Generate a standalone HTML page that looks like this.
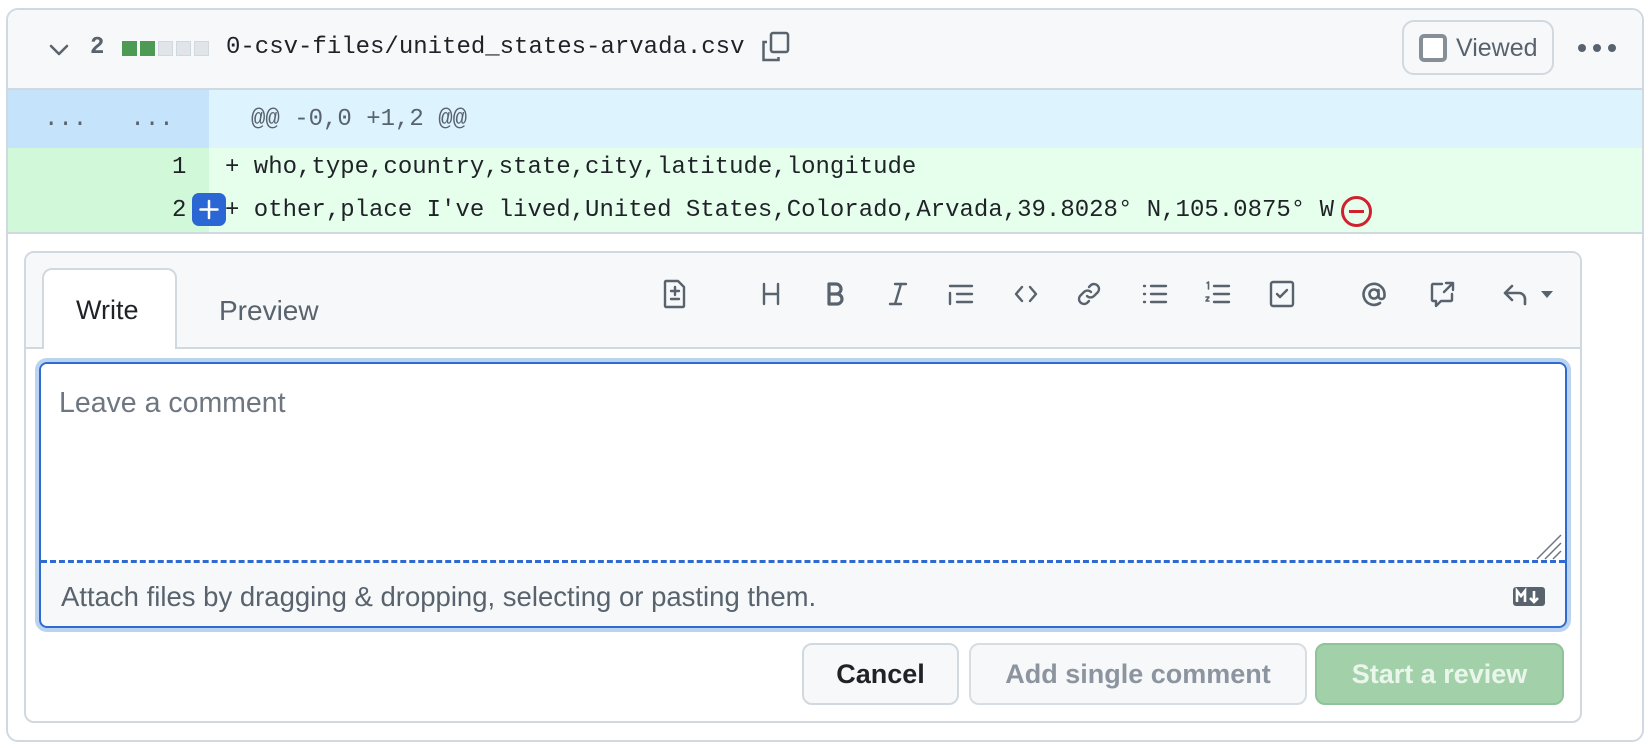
<!DOCTYPE html>
<html><head><meta charset="utf-8"><style>
*{box-sizing:border-box;margin:0;padding:0}
body{width:1652px;height:748px;background:#fff;position:relative;overflow:hidden;font-family:"Liberation Sans",Arial,sans-serif}
.a{position:absolute}
.mono{font-family:"Liberation Mono",monospace;font-size:24px;color:#1f2328;white-space:pre}
.ic{position:absolute;top:278px;width:32px;height:32px}
.ic svg{width:32px;height:32px;fill:none;stroke:#59636e;stroke-width:2.4;stroke-linecap:round;stroke-linejoin:round}
</style></head><body>
<div class="a" style="left:6px;top:8px;width:1638px;height:734px;border:2px solid #d1d9e0;border-radius:12px;overflow:hidden">
 <div class="a" style="left:0;top:0;width:100%;height:80px;background:#f6f8fa;border-bottom:2px solid #d1d9e0"></div>
 <div class="a" style="left:0;top:80px;width:100%;height:58px;background:#ddf4ff"></div>
 <div class="a" style="left:0;top:80px;width:201px;height:58px;background:#c5e3fb"></div>
 <div class="a" style="left:0;top:138px;width:100%;height:86px;background:#e6ffec;border-bottom:2px solid #d1d9e0"></div>
 <div class="a" style="left:0;top:138px;width:201px;height:84px;background:#d1f8d9"></div>
</div>
<!-- header -->
<svg class="a" style="left:47px;top:40px" width="24" height="20" viewBox="0 0 24 20"><path d="M4 6l8 8 8-8" fill="none" stroke="#59636e" stroke-width="2.5" stroke-linecap="round" stroke-linejoin="round"/></svg>
<div class="a mono" style="left:90px;top:34px;font-weight:bold;color:#59636e">2</div>
<div class="a" style="left:122px;top:41px;display:flex;gap:3px">
<i style="width:15px;height:15px;background:#4c9a53;display:block"></i><i style="width:15px;height:15px;background:#4c9a53;display:block"></i><i style="width:15px;height:15px;background:#e1e4e8;display:block;border:1px solid #d1d9e0"></i><i style="width:15px;height:15px;background:#e1e4e8;display:block;border:1px solid #d1d9e0"></i><i style="width:15px;height:15px;background:#e1e4e8;display:block;border:1px solid #d1d9e0"></i></div>
<div class="a mono" style="left:226px;top:34px">0-csv-files/united_states-arvada.csv</div>
<svg class="a" style="left:759px;top:30px" width="34" height="34" viewBox="0 0 34 34" fill="none" stroke="#59636e" stroke-width="2.5"><path d="M8 12H4.5v18h15v-3"/><rect x="12" y="3" width="17" height="19" rx="2"/></svg>
<div class="a" style="left:1402px;top:20px;width:152px;height:55px;border:2px solid #d1d9e0;border-radius:12px;background:#f6f8fa"></div>
<div class="a" style="left:1419px;top:34px;width:28px;height:28px;border:4px solid #868e96;border-radius:5px;background:#fff"></div>
<div class="a" style="left:1456px;top:34px;font-size:25px;color:#59636e">Viewed</div>
<div class="a" style="left:1578px;top:44px;display:flex;gap:7px"><i style="width:8px;height:8px;border-radius:50%;background:#59636e;display:block"></i><i style="width:8px;height:8px;border-radius:50%;background:#59636e;display:block"></i><i style="width:8px;height:8px;border-radius:50%;background:#59636e;display:block"></i></div>
<!-- diff -->
<div class="a mono" style="left:44px;top:106px;color:#59636e">...   ...</div>
<div class="a mono" style="left:251px;top:106px;color:#59636e">@@ -0,0 +1,2 @@</div>
<div class="a mono" style="left:172px;top:154px">1</div>
<div class="a mono" style="left:225px;top:154px">+ who,type,country,state,city,latitude,longitude</div>
<div class="a mono" style="left:172px;top:197px">2</div>
<div class="a mono" style="left:225px;top:197px">+ other,place I've lived,United States,Colorado,Arvada,39.8028° N,105.0875° W</div>
<div class="a" style="left:192px;top:193px;width:34px;height:33px;background:#2a67d5;border-radius:7px"><svg width="34" height="33"><path d="M17 8v17M8.5 16.5h17" stroke="#fff" stroke-width="2.5" stroke-linecap="round"/></svg></div>
<svg class="a" style="left:1340px;top:195px" width="33" height="33"><circle cx="16.5" cy="16.5" r="14" fill="none" stroke="#cf222e" stroke-width="3"/><path d="M9 16.5h15" stroke="#cf222e" stroke-width="3"/></svg>
<!-- comment box -->
<div class="a" style="left:24px;top:251px;width:1558px;height:472px;border:2px solid #d1d9e0;border-radius:10px;overflow:hidden">
 <div class="a" style="left:0;top:0;width:100%;height:96px;background:#f6f8fa;border-bottom:2px solid #d1d9e0"></div>
</div>
<div class="a" style="left:42px;top:268px;width:135px;height:81px;background:#fff;border:2px solid #d1d9e0;border-bottom:none;border-radius:10px 10px 0 0"></div>
<div class="a" style="left:76px;top:295px;font-size:27px;color:#1f2328">Write</div>
<div class="a" style="left:219px;top:295px;font-size:28px;color:#59636e">Preview</div>
<!-- toolbar icons -->
<div class="ic" style="left:659px"><svg viewBox="0 0 32 32"><path d="M7 3h12l6 6v19a1 1 0 0 1-1 1H7a1 1 0 0 1-1-1V4a1 1 0 0 1 1-1zM16 9v8M12 13h8M12 21h8"/></svg></div>
<div class="ic" style="left:755px"><svg viewBox="0 0 32 32"><path d="M9 6v20M23 6v20M9 16h14"/></svg></div>
<div class="ic" style="left:819px"><svg viewBox="0 0 32 32" style="stroke-width:3.2"><path d="M10 6h7a5 5 0 0 1 0 10h-7zM10 16h8a5 5 0 0 1 0 10h-8zM10 6v20"/></svg></div>
<div class="ic" style="left:882px"><svg viewBox="0 0 32 32"><path d="M13 6h11M8 26h11M19 6l-6 20"/></svg></div>
<div class="ic" style="left:945px"><svg viewBox="0 0 32 32"><path d="M5 8h22M12 16h15M12 24h15M5 15v11"/></svg></div>
<div class="ic" style="left:1010px"><svg viewBox="0 0 32 32"><path d="M12 9l-6 7 6 7M20 9l6 7-6 7"/></svg></div>
<div class="ic" style="left:1073px"><svg viewBox="0 0 32 32"><path d="M14 18a5 5 0 0 0 7 0l4-4a5 5 0 0 0-7-7l-2 2M18 14a5 5 0 0 0-7 0l-4 4a5 5 0 0 0 7 7l2-2"/></svg></div>
<div class="ic" style="left:1139px"><svg viewBox="0 0 32 32"><path d="M12 8h15M12 16h15M12 24h15M5 8h1M5 16h1M5 24h1"/></svg></div>
<div class="ic" style="left:1202px"><svg viewBox="0 0 32 32"><path d="M12 8h15M12 16h15M12 24h15"/><path d="M5 5l1.5-1v7M4 19h3l-3 4h3" style="stroke-width:1.6"/></svg></div>
<div class="ic" style="left:1266px"><svg viewBox="0 0 32 32"><rect x="5" y="4" width="22" height="24" rx="2"/><path d="M11 16l3 3 7-7"/></svg></div>
<div class="ic" style="left:1358px"><svg viewBox="0 0 32 32" style="stroke-width:2.6"><circle cx="16" cy="16" r="4.5"/><path d="M20.5 12v6a3 3 0 0 0 6 0v-2A10.5 10.5 0 1 0 22 25"/></svg></div>
<div class="ic" style="left:1427px"><svg viewBox="0 0 32 32"><path d="M15 6H6a1 1 0 0 0-1 1v15a1 1 0 0 0 1 1h3v5l5-5h10a1 1 0 0 0 1-1v-6M19 5h7v7M26 5l-9 9"/></svg></div>
<div class="ic" style="left:1500px"><svg viewBox="0 0 32 32" style="stroke-width:2.6"><path d="M12 8l-7 7 7 7M5 15h14a6 6 0 0 1 6 6v5"/></svg></div>
<svg class="a" style="left:1540px;top:289px" width="14" height="10"><path d="M1 2h12l-6 7z" fill="#59636e"/></svg>
<!-- textarea -->
<div class="a" style="left:35px;top:358px;width:1536px;height:274px;border:4px solid #b9d3f1;border-radius:12px"></div>
<div class="a" style="left:39px;top:362px;width:1528px;height:266px;border:2px solid #2f6ad0;border-radius:8px;overflow:hidden;background:#f6f8fa">
 <div class="a" style="left:0;top:0;width:100%;height:199px;background:#fff;border-bottom:3px dashed #2f6ad0"></div>
</div>
<div class="a" style="left:59px;top:387px;font-size:28.5px;color:#6e7781">Leave a comment</div>
<svg class="a" style="left:1533px;top:533px" width="30" height="28"><path d="M28 2L4 26M28 10L12 26M28 18L20 26" stroke="#6e7781" stroke-width="1.5"/></svg>
<div class="a" style="left:61px;top:581px;font-size:27.5px;color:#59636e">Attach files by dragging &amp; dropping, selecting or pasting them.</div>
<div class="a" style="left:1513px;top:587px;width:32px;height:19px;background:#59636e;border-radius:3px"><svg width="32" height="19"><path d="M4 15V4l4 5 4-5v11M21 4v10M17 11l4 4 4-4" fill="none" stroke="#fff" stroke-width="2.6"/></svg></div>
<!-- buttons -->
<div class="a" style="left:802px;top:643px;width:157px;height:62px;border:2px solid #d1d9e0;border-radius:10px;background:#f6f8fa;font-size:27px;font-weight:bold;color:#1f2328;text-align:center;line-height:58px">Cancel</div>
<div class="a" style="left:969px;top:643px;width:338px;height:62px;border:2px solid #d8dde2;border-radius:10px;background:#f6f8fa;font-size:27px;font-weight:bold;color:#8c959f;text-align:center;line-height:58px">Add single comment</div>
<div class="a" style="left:1315px;top:643px;width:249px;height:62px;border:2px solid #8fc399;border-radius:10px;background:#a2d1a9;font-size:27px;font-weight:bold;color:#eaf6ec;text-align:center;line-height:58px">Start a review</div>
</body></html>
